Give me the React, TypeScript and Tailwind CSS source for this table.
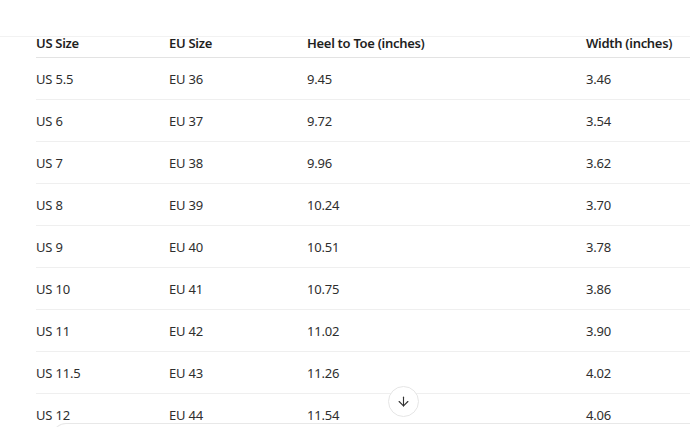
import { ArrowDown } from 'lucide-react';

const rows = [
  ['US 5.5', 'EU 36', '9.45', '3.46'],
  ['US 6', 'EU 37', '9.72', '3.54'],
  ['US 7', 'EU 38', '9.96', '3.62'],
  ['US 8', 'EU 39', '10.24', '3.70'],
  ['US 9', 'EU 40', '10.51', '3.78'],
  ['US 10', 'EU 41', '10.75', '3.86'],
  ['US 11', 'EU 42', '11.02', '3.90'],
  ['US 11.5', 'EU 43', '11.26', '4.02'],
  ['US 12', 'EU 44', '11.54', '4.06'],
];

const cols = 'grid grid-cols-[133px_138px_279px_1fr]';

export default function App() {
  return (
    <div
      className="relative w-[690px] h-[427px] overflow-hidden bg-white text-[13px]"
      style={{ fontFamily: '"Noto Sans", "Open Sans", sans-serif' }}
    >
      <div className="mt-[36px] border-t border-[#f2f2f2]">
        <div className="ml-[36px] w-[760px]">
          <div className={`${cols} h-[21px] border-b border-[#e3e3e3] font-semibold text-[#1f1f1f] leading-[13px] tracking-[-0.3px]`}>
            <div>US Size</div>
            <div>EU Size</div>
            <div>Heel to Toe (inches)</div>
            <div>Width (inches)</div>
          </div>
          {rows.map((r) => (
            <div key={r[0]} className={`${cols} h-[42px] pt-[2px] items-center border-b border-[#efefef] text-[#2e2e2e] tracking-[-0.2px]`}>
              {r.map((c, i) => (
                <div key={i}>{c}</div>
              ))}
            </div>
          ))}
        </div>
      </div>

      <button className="absolute left-[388px] top-[386px] w-[31px] h-[31px] rounded-full bg-white border border-[#e6e6e6] flex items-center justify-center text-[#333]">
        <ArrowDown size={15} strokeWidth={1.8} />
      </button>

      <div className="absolute left-[52px] right-0 top-[423px] h-[20px] bg-white border-t border-l border-[#e8e8e8] rounded-tl-[14px]" />
    </div>
  );
}
